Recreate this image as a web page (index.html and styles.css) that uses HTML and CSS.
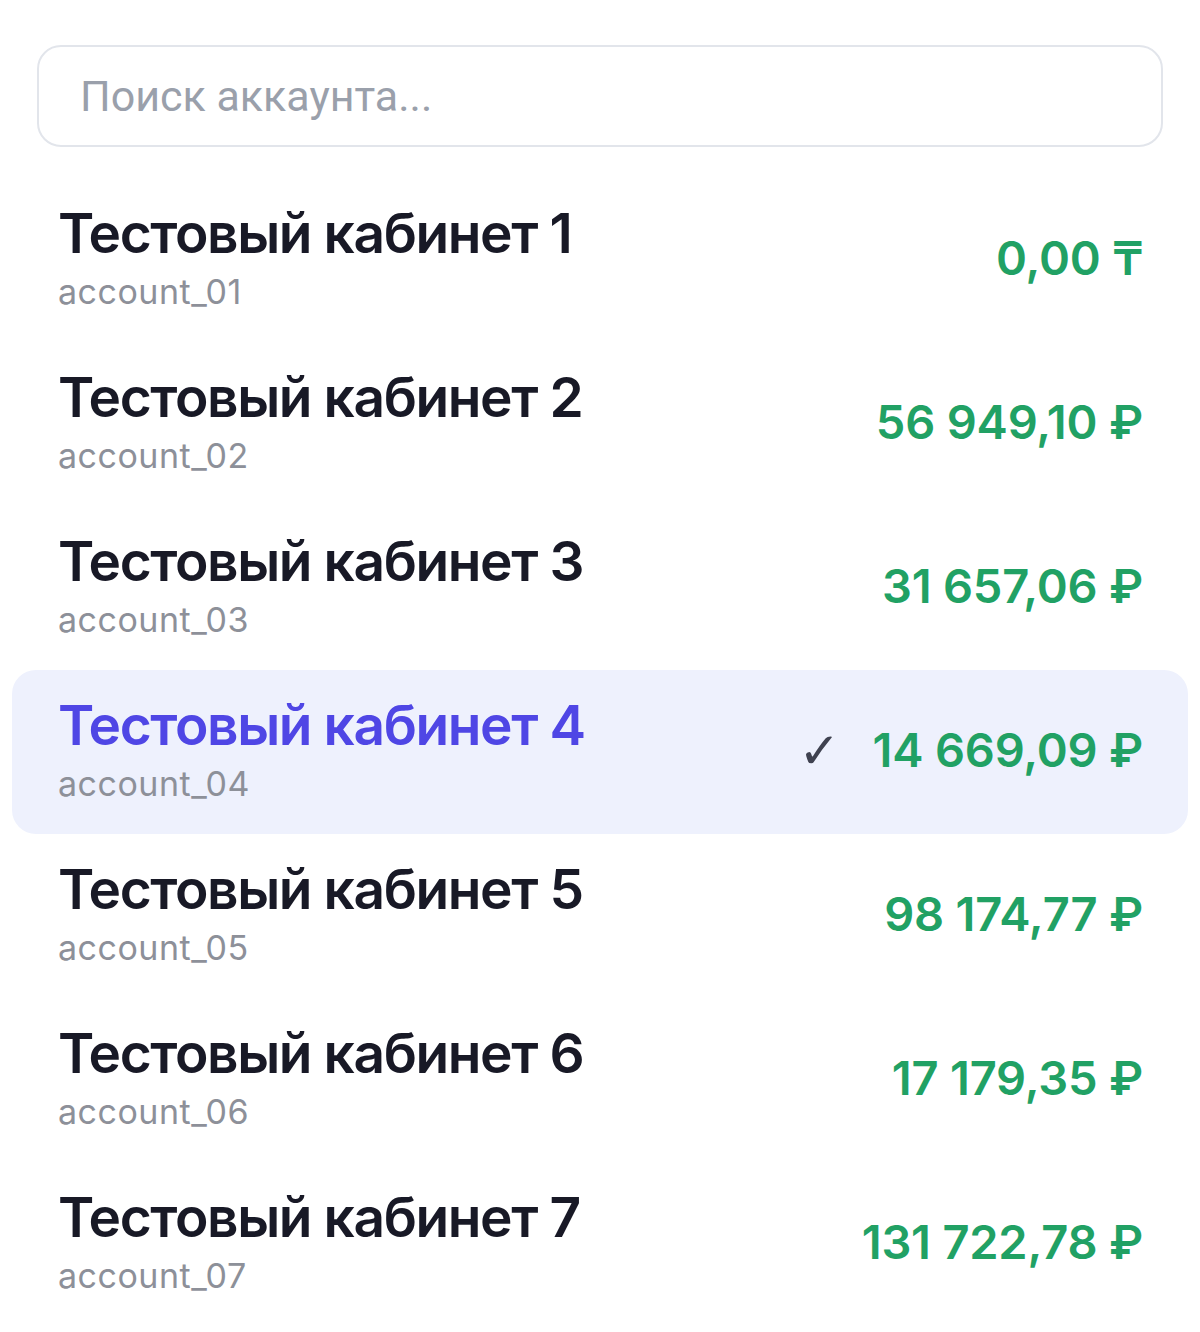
FILE: index.html
```html
<!DOCTYPE html>
<html lang="ru">
<head>
<meta charset="utf-8">
<link rel="stylesheet" href="styles.css">
</head>
<body>
<div class="page">
  <div class="search"><input class="search-input" type="text" placeholder="Поиск аккаунта..."></div>
  <ul class="list">
    <li class="row">
      <div class="info"><div class="title">Тестовый кабинет 1</div><div class="login">account_01</div></div>
      <div class="right"><span class="amount">0,00 ₸</span></div>
    </li>
    <li class="row">
      <div class="info"><div class="title">Тестовый кабинет 2</div><div class="login">account_02</div></div>
      <div class="right"><span class="amount">56 949,10 ₽</span></div>
    </li>
    <li class="row">
      <div class="info"><div class="title">Тестовый кабинет 3</div><div class="login">account_03</div></div>
      <div class="right"><span class="amount">31 657,06 ₽</span></div>
    </li>
    <li class="row selected">
      <div class="info"><div class="title">Тестовый кабинет 4</div><div class="login">account_04</div></div>
      <div class="right"><span class="check">✓</span><span class="amount">14 669,09 ₽</span></div>
    </li>
    <li class="row">
      <div class="info"><div class="title">Тестовый кабинет 5</div><div class="login">account_05</div></div>
      <div class="right"><span class="amount">98 174,77 ₽</span></div>
    </li>
    <li class="row">
      <div class="info"><div class="title">Тестовый кабинет 6</div><div class="login">account_06</div></div>
      <div class="right"><span class="amount">17 179,35 ₽</span></div>
    </li>
    <li class="row">
      <div class="info"><div class="title">Тестовый кабинет 7</div><div class="login">account_07</div></div>
      <div class="right"><span class="amount">131 722,78 ₽</span></div>
    </li>
  </ul>
</div>
</body>
</html>
```
FILE: styles.css
```css
* { box-sizing: border-box; }
html, body { margin: 0; padding: 0; background: #ffffff; }
body { font-family: "Inter", "Noto Sans", sans-serif; }
.page { padding: 45px 12px 0; }
.search { margin: 0 25px 31px; }
.search-input {
  display: block;
  width: 100%;
  height: 102px;
  border: 2px solid #e2e5eb;
  border-radius: 24px;
  padding: 0 41px;
  font-family: "Roboto", sans-serif;
  font-size: 43px;
  color: #1a1b2a;
  background: #fff;
  outline: none;
}
.search-input::placeholder { color: #9aa0ab; }
.list { list-style: none; margin: 0; padding: 0; }
.row {
  display: flex;
  align-items: center;
  justify-content: space-between;
  height: 164px;
  padding: 0 45px 0 46px;
  border-radius: 24px;
}
.row.selected { background: #eef1fd; }
.info { display: flex; flex-direction: column; }
.title {
  font-size: 55px;
  line-height: 60px;
  font-weight: 600;
  color: #181926;
  letter-spacing: -1.4px;
}
.selected .title { color: #4f46e5; }
.login {
  font-size: 34px;
  line-height: 52px;
  margin-top: 3px;
  color: #8d9099;
  letter-spacing: 0.5px;
}
.right { display: flex; align-items: center; gap: 32px; margin-bottom: 6px; }
.check {
  font-family: "DejaVu Sans", sans-serif;
  font-size: 50px;
  line-height: 1;
  color: #3f4250;
  margin-top: 4px;
}
.amount {
  font-size: 47px;
  font-weight: 600;
  color: #21a164;
  letter-spacing: -0.2px;
}
```
